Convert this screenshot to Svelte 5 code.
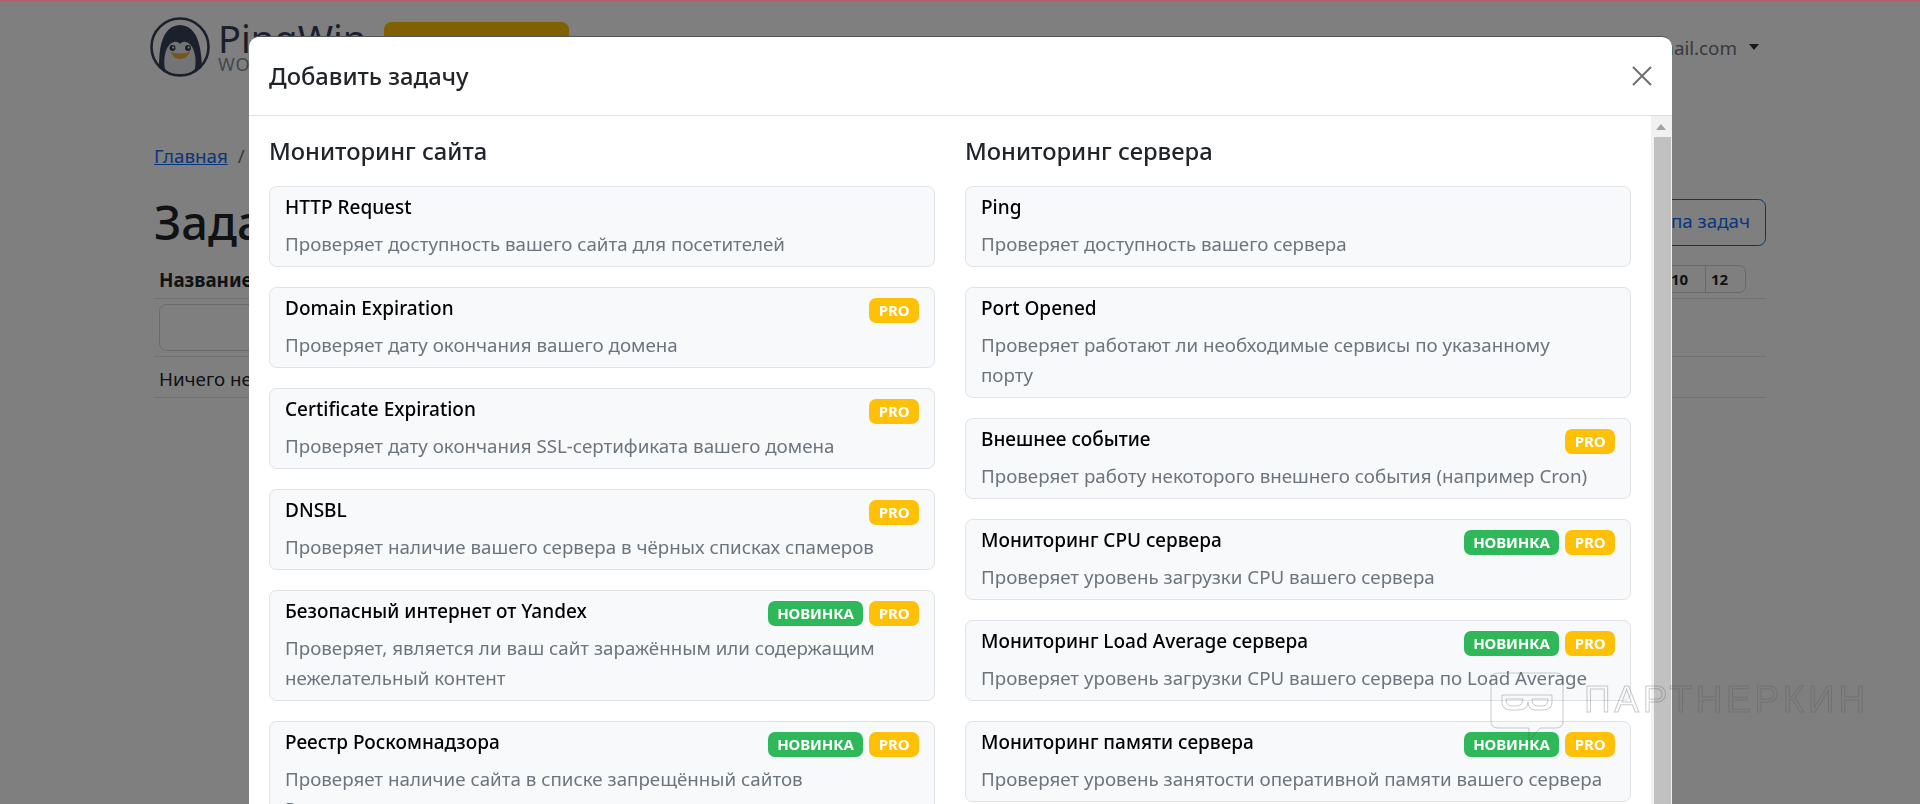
<script>
  const left = [
    { t: 'HTTP Request', d: 'Проверяет доступность вашего сайта для посетителей', b: [] },
    { t: 'Domain Expiration', d: 'Проверяет дату окончания вашего домена', b: ['pro'] },
    { t: 'Certificate Expiration', d: 'Проверяет дату окончания SSL-сертификата вашего домена', b: ['pro'] },
    { t: 'DNSBL', d: 'Проверяет наличие вашего сервера в чёрных списках спамеров', b: ['pro'] },
    { t: 'Безопасный интернет от Yandex', d: 'Проверяет, является ли ваш сайт заражённым или содержащим нежелательный контент', b: ['new', 'pro'] },
    { t: 'Реестр Роскомнадзора', d: 'Проверяет наличие сайта в списке запрещённый сайтов Роскомнадзора', b: ['new', 'pro'] }
  ];
  const right = [
    { t: 'Ping', d: 'Проверяет доступность вашего сервера', b: [] },
    { t: 'Port Opened', d: 'Проверяет работают ли необходимые сервисы по указанному порту', b: [], tight: true },
    { t: 'Внешнее событие', d: 'Проверяет работу некоторого внешнего события (например Cron)', b: ['pro'] },
    { t: 'Мониторинг CPU сервера', d: 'Проверяет уровень загрузки CPU вашего сервера', b: ['new', 'pro'] },
    { t: 'Мониторинг Load Average сервера', d: 'Проверяет уровень загрузки CPU вашего сервера по Load Average', b: ['new', 'pro'] },
    { t: 'Мониторинг памяти сервера', d: 'Проверяет уровень занятости оперативной памяти вашего сервера', b: ['new', 'pro'] }
  ];
  const cols = [
    { h: 'Мониторинг сайта', items: left },
    { h: 'Мониторинг сервера', items: right }
  ];
  const hours = ['2', '4', '6', '8', '10', '12'];
</script>

<div class="page">
  <header class="nav">
    <div class="brand">
      <svg class="logo" viewBox="0 0 60 60" width="60" height="60" aria-hidden="true">
        <circle cx="30" cy="30" r="28.5" fill="none" stroke="#36405a" stroke-width="2.6" />
        <path d="M9 50 C9 30 12 9 30 8 C48 9 51 30 52 50 C46 55 38 58 30 58 C22 58 14 55 9 50Z" fill="#36405a" />
        <path d="M15 52 C13 40 16 27 24 25 C27 24 29 26 30 27 C31 26 33 24 36 25 C44 27 47 40 45 52 C41 56 36 57 30 57 C24 57 19 56 15 52Z" fill="#e6e8ea" />
        <circle cx="22.5" cy="31" r="3" fill="#36405a" />
        <circle cx="38" cy="31" r="3" fill="#36405a" />
        <circle cx="23.2" cy="30.4" r="1" fill="#fff" />
        <circle cx="38.7" cy="30.4" r="1" fill="#fff" />
        <path d="M21 35 C26 37 35 37 40 34.5 C38 40 34 42 30 42 C26 42 23 40 21 35Z" fill="#f0a83c" />
      </svg>
      <div class="brandtext">
        <span class="bname">PingWin</span>
        <span class="bsub">WORK</span>
      </div>
    </div>
    <button class="upgrade">Улучшить тариф</button>
    <div class="user">info@gmail.com<span class="caret"></span></div>
  </header>

  <nav class="crumbs"><a href="#top">Главная</a><span class="sep">/</span><span>Задачи</span></nav>

  <div class="titlebar">
    <h1>Задачи</h1>
    <button class="outline">Группа задач</button>
  </div>

  <div class="row rowhead">
    <strong>Название</strong>
    <div class="hours">
      {#each hours as h}<span>{h}</span>{/each}
    </div>
  </div>
  <div class="row rowinput"><input type="text" aria-label="Поиск" /></div>
  <div class="row rowempty">Ничего не найдено</div>
</div>

<div class="backdrop"></div>
<div class="stripe"></div>

<section class="modal">
  <div class="mhead">
    <h5>Добавить задачу</h5>
    <svg class="close" viewBox="0 0 20 20" width="20" height="20" aria-hidden="true">
      <path d="M1 1 L19 19 M19 1 L1 19" stroke="#6f6f6f" stroke-width="2" fill="none" />
    </svg>
  </div>
  <div class="mbody">
    <div class="content">
      {#each cols as col}
        <div class="col">
          <h5 class="colh">{col.h}</h5>
          {#each col.items as it}
            <div class="card">
              <div class="ctop">
                <span class="ctitle">{it.t}</span>
                {#if it.b.length}
                  <span class="badges">
                    {#each it.b as b}
                      <span class="badge {b}">{b === 'new' ? 'НОВИНКА' : 'PRO'}</span>
                    {/each}
                  </span>
                {/if}
              </div>
              <p class="cdesc" class:tight={it.tight}>{it.d}</p>
            </div>
          {/each}
        </div>
      {/each}
    </div>
    <div class="sbar">
      <div class="sarrow"></div>
      <div class="sthumb"></div>
    </div>
  </div>
</section>

<div class="mark">
  <svg viewBox="0 0 74 72" width="74" height="72" aria-hidden="true">
    <path d="M8 1 H66 Q73 1 73 8 V49 Q73 56 66 56 H50 L39 69 L39 56 H8 Q1 56 1 49 V8 Q1 1 8 1Z" fill="none" stroke="currentColor" />
    <path d="M12 23 H62 V30 Q62 38 53 38 H46 Q38 38 38 30 Q38 38 28 38 H21 Q12 38 12 30Z" fill="none" stroke="currentColor" />
    <path d="M16 27 H33 Q33 34 26 34 H22 Q16 34 16 27Z M42 27 H58 Q58 34 52 34 H48 Q42 34 42 27Z" fill="none" stroke="currentColor" />
  </svg>
  <span>ПАРТНЕРКИН</span>
</div>

<style>
  :global(body) {
    margin: 0;
    overflow: hidden;
    background: #fff;
    font-family: "Noto Sans", "Open Sans", sans-serif;
    font-size: 18.75px;
    line-height: 30px;
    color: #212529;
  }
  .page {
    height: 804px;
    padding: 0 154px;
    box-sizing: border-box;
    overflow: hidden;
  }
  .nav {
    height: 94px;
    display: flex;
    align-items: center;
  }
  .brand {
    display: flex;
    align-items: center;
    gap: 8px;
    width: 230px;
    margin-left: -4px;
    margin-right: 4px;
  }
  .brandtext {
    display: flex;
    flex-direction: column;
    line-height: 1;
  }
  .bname {
    font-size: 38px;
    font-weight: 400;
    color: #36405a;
    height: 34px;
    line-height: 34px;
  }
  .bsub {
    font-size: 18px;
    color: #8a8f98;
    letter-spacing: 1px;
    line-height: 18px;
  }
  .upgrade {
    width: 185px;
    height: 47px;
    margin-top: -4px;
    border: 0;
    border-radius: 7.5px;
    background: #ffc107;
    font: inherit;
    color: #000;
  }
  .user {
    margin-left: auto;
    margin-right: 7px;
    margin-top: 2px;
    color: #6c757d;
    display: flex;
    align-items: center;
  }
  .caret {
    margin-left: 12px;
    margin-top: -3px;
    border-top: 6px solid #333;
    border-left: 5.5px solid transparent;
    border-right: 5.5px solid transparent;
  }
  .crumbs {
    margin-top: 47px;
    height: 30px;
    color: #6c757d;
  }
  .crumbs a { color: #0d6efd; }
  .sep { margin: 0 10px; }
  .titlebar {
    margin-top: 21px;
    height: 60px;
    display: flex;
    align-items: center;
    justify-content: space-between;
  }
  h1 {
    margin: 0;
    font-size: 47px;
    font-weight: 500;
    line-height: 60px;
  }
  .outline {
    height: 47px;
    padding: 0 15px 2px;
    border: 1px solid #0d6efd;
    border-radius: 7.5px;
    background: #fff;
    color: #0d6efd;
    font: inherit;
  }
  .row {
    padding: 5px;
    border-bottom: 1px solid #dee2e6;
  }
  .rowempty { padding: 7px 5px 3px; }
  .rowhead {
    height: 47px;
    box-sizing: border-box;
    padding: 0 20px 5px 5px;
    display: flex;
    align-items: flex-end;
    justify-content: space-between;
  }
  .rowhead strong { margin-bottom: -2px; }
  .hours {
    display: flex;
    height: 28px;
    box-sizing: border-box;
    border: 1px solid #ced4da;
    border-radius: 7px;
    font-size: 15px;
    font-weight: 700;
    line-height: 26px;
  }
  .hours span {
    padding-left: 5px;
    width: 34px;
    border-left: 1px solid #ced4da;
  }
  .hours span:first-child { border-left: 0; }
  .rowinput input {
    display: block;
    box-sizing: border-box;
    width: 400px;
    height: 47px;
    border: 1px solid #ced4da;
    border-radius: 7.5px;
    background: #fff;
  }
  .backdrop {
    position: fixed;
    inset: 0;
    background: rgba(0, 0, 0, 0.5);
  }
  .stripe {
    position: fixed;
    top: 0;
    left: 0;
    right: 0;
    height: 2px;
    background: #b5606a;
  }
  .modal {
    position: fixed;
    left: 249px;
    top: 36px;
    width: 1423px;
    height: 768px;
    background: #fff;
    border-radius: 10px 10px 0 0;
    display: flex;
    flex-direction: column;
    overflow: hidden;
    border-top: 1px solid #555;
    box-sizing: border-box;
  }
  h5 {
    margin: 0;
    font-size: 23.75px;
    font-weight: 500;
    line-height: 30px;
  }
  .mhead {
    height: 79px;
    flex: none;
    box-sizing: border-box;
    padding: 0 20px;
    border-bottom: 1px solid #dee2e6;
    display: flex;
    align-items: center;
    justify-content: space-between;
  }
  .mbody {
    flex: 1;
    min-height: 0;
    display: flex;
    overflow: hidden;
  }
  .content {
    flex: 1;
    min-width: 0;
    padding: 20px 20px 0;
    display: grid;
    grid-template-columns: 666px 666px;
    column-gap: 30px;
    align-content: start;
  }
  .colh { margin-bottom: 20px; }
  .card {
    border: 1px solid #dfe2e6;
    border-radius: 7.5px;
    background: #f8f9fa;
    padding: 5px 15px 7px;
    margin-bottom: 20px;
  }
  .ctop {
    display: flex;
    justify-content: space-between;
    align-items: flex-start;
    margin-bottom: 7px;
  }
  .ctitle {
    color: #000;
    font-size: 19px;
    font-weight: 500;
  }
  .badges {
    display: flex;
    gap: 6px;
    margin-top: 5px;
  }
  .badge {
    height: 25px;
    box-sizing: border-box;
    padding: 0 9.5px;
    border-radius: 7px;
    color: #fff;
    font-size: 15px;
    font-weight: 700;
    letter-spacing: -0.1px;
    line-height: 25px;
  }
  .badge.new { background: #2fb859; }
  .badge.pro { background: #ffc107; }
  .cdesc {
    margin: 0;
    color: #6c757d;
  }
  .cdesc.tight { max-width: 600px; }
  .sbar {
    width: 21px;
    flex: none;
    background: #f1f1f1;
    display: flex;
    flex-direction: column;
    align-items: flex-end;
  }
  .sarrow {
    height: 21px;
    width: 100%;
    box-sizing: border-box;
    background: #f1f1f1;
    position: relative;
  }
  .sarrow::after {
    content: "";
    position: absolute;
    left: 5px;
    top: 8px;
    border-bottom: 6px solid #a3a3a3;
    border-left: 5px solid transparent;
    border-right: 5px solid transparent;
  }
  .sthumb {
    flex: 1;
    width: 17px;
    margin-right: 1px;
    background: #c1c1c1;
  }
  .mark {
    position: fixed;
    left: 1490px;
    top: 672px;
    display: flex;
    align-items: flex-start;
    gap: 20px;
    color: rgba(80, 80, 80, 0.3);
    pointer-events: none;
  }
  .mark span {
    margin-top: 7px;
    font-family: "Liberation Sans", sans-serif;
    font-size: 37px;
    letter-spacing: 3.7px;
    line-height: 42px;
    color: transparent;
    -webkit-text-stroke: 1px rgba(80, 80, 80, 0.3);
  }
</style>
